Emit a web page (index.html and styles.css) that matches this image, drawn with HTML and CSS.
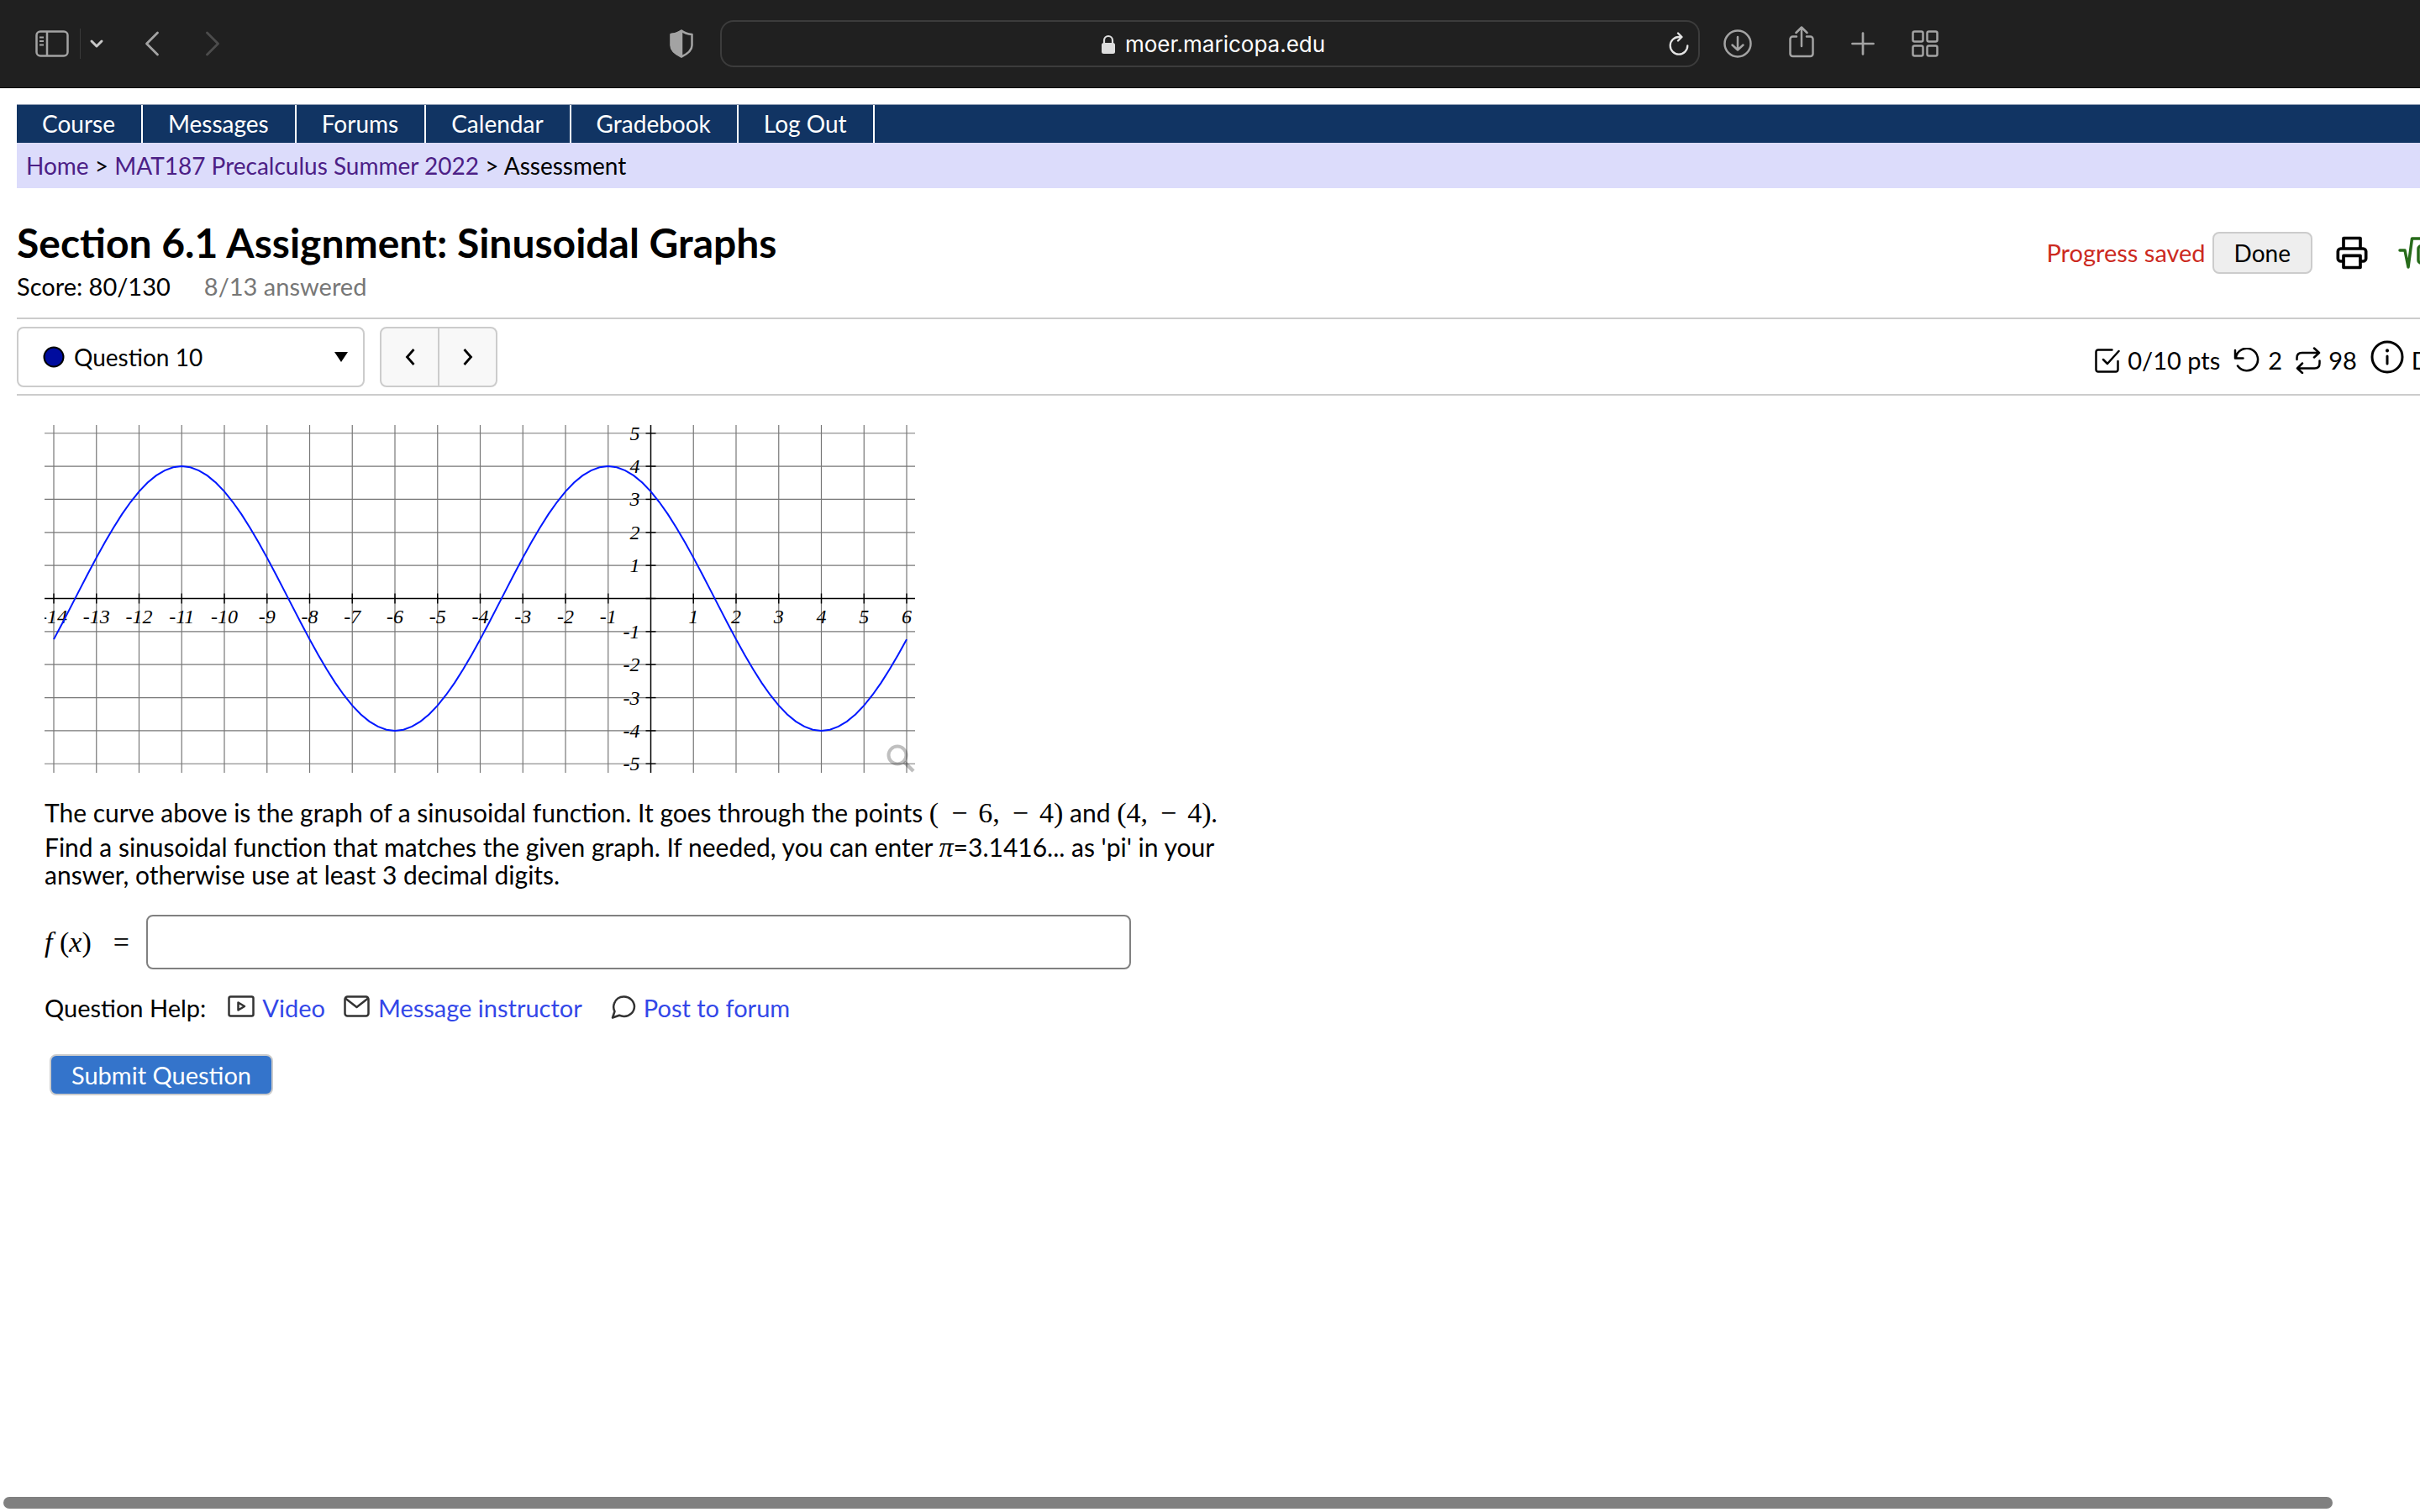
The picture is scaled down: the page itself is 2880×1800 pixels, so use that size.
FILE: index.html
```html
<!DOCTYPE html>
<html lang="en">
<head>
    <meta charset="UTF-8">
    <meta name="viewport" content="width=device-width, initial-scale=1.0">
    <title>Section 6.1 Assignment: Sinusoidal Graphs</title>
    <link rel="stylesheet" href="styles.css">
</head>
<body>
    <header class="toolbar">
        <div class="toolbar-left">
            <button class="tool sidebar-tool" aria-label="Sidebar">
                <svg width="40" height="32" viewBox="0 0 40 32" fill="none" stroke="#a3a3a3" stroke-width="2.5"><rect x="1.5" y="1.5" width="37" height="29" rx="4.5"/><path d="M14 2v28"/><path d="M5 8.5h5M5 13h5M5 17.500h5" stroke-width="2"/></svg>
            </button>
            <span class="divider"></span>
            <button class="tool menu-tool" aria-label="Tab groups">
                <svg width="18" height="12" viewBox="0 0 18 12" fill="none" stroke="#c8c8c8" stroke-width="3" stroke-linecap="round" stroke-linejoin="round"><path d="M3 3l6 6 6-6"/></svg>
            </button>
            <button class="tool back-tool" aria-label="Back">
                <svg width="18" height="30" viewBox="0 0 18 30" fill="none" stroke="#a3a3a3" stroke-width="2.800" stroke-linecap="round" stroke-linejoin="round"><path d="M15.500 2L2.500 15l13 13"/></svg>
            </button>
            <button class="tool forward-tool" aria-label="Forward">
                <svg width="18" height="30" viewBox="0 0 18 30" fill="none" stroke="#4c4c4c" stroke-width="2.800" stroke-linecap="round" stroke-linejoin="round"><path d="M2.500 2l13 13-13 13"/></svg>
            </button>
            <button class="tool shield-tool" aria-label="Privacy report">
                <svg width="28" height="34" viewBox="0 0 28 34" fill="none" stroke="#a3a3a3" stroke-width="2.500" stroke-linejoin="round"><path d="M14 1.500C17 4 21 5.500 26.500 6v13c0 6-5 10-12.500 13.500C6.500 29 1.500 25 1.500 19V6C7 5.500 11 4 14 1.500z"/><path d="M14 2v30C7 29 2 25 2 19V6c5-.5 9-2 12-4z" fill="#a3a3a3"/></svg>
            </button>
        </div>
        <div class="address">
            <div class="address-text">
                <svg width="16" height="24" viewBox="0 0 16 24"><path d="M3 11V7a5 5 0 0 1 10 0v4" fill="none" stroke="#dedede" stroke-width="2.200"/><rect y="10" width="16" height="13" rx="2.500" fill="#dedede"/></svg>
                <span>moer.maricopa.edu</span>
            </div>
            <button class="tool reload" aria-label="Reload">
                <svg width="26" height="28" viewBox="0 0 26 28" fill="none" stroke="#e4e4e4" stroke-width="2.300" stroke-linecap="round" stroke-linejoin="round"><path d="M13 6a10.300 10.300 0 1 0 10.300 10.300M13 6h3M12 1.500L16.500 6 12 10.500"/></svg>
            </button>
        </div>
        <div class="toolbar-right">
            <button class="tool" aria-label="Downloads">
                <svg width="34" height="34" viewBox="0 0 34 34" fill="none" stroke="#a3a3a3" stroke-width="2.500" stroke-linecap="round" stroke-linejoin="round"><circle cx="17" cy="17" r="15.500"/><path d="M17 9v15.500M10.500 18.500l6.500 6 6.500-6"/></svg>
            </button>
            <button class="tool share-tool" aria-label="Share">
                <svg width="30" height="38" viewBox="0 0 30 38" fill="none" stroke="#a3a3a3" stroke-width="2.500" stroke-linecap="round" stroke-linejoin="round"><path d="M9 12.500H4.500a3 3 0 0 0-3 3V33a3 3 0 0 0 3 3h21a3 3 0 0 0 3-3V15.500a3 3 0 0 0-3-3H21M15 24V2M8.500 8L15 1.500 21.500 8"/></svg>
            </button>
            <button class="tool" aria-label="New tab">
                <svg width="28" height="28" viewBox="0 0 28 28" fill="none" stroke="#a3a3a3" stroke-width="2.700" stroke-linecap="round"><path d="M14 1.500v25M1.500 14h25"/></svg>
            </button>
            <button class="tool" aria-label="Tab overview">
                <svg width="32" height="32" viewBox="0 0 32 32" fill="none" stroke="#a3a3a3" stroke-width="2.500"><rect x="1.500" y="1.500" width="12" height="12" rx="2"/><rect x="18.500" y="1.500" width="12" height="12" rx="2"/><rect x="1.500" y="18.500" width="12" height="12" rx="2"/><rect x="18.500" y="18.500" width="12" height="12" rx="2"/></svg>
            </button>
        </div>
    </header>

    <div class="page">
        <nav class="navbar">
            <a href="#">Course</a>
            <a href="#">Messages</a>
            <a href="#">Forums</a>
            <a href="#">Calendar</a>
            <a href="#">Gradebook</a>
            <a href="#">Log Out</a>
        </nav>
        <div class="breadcrumb"><a href="#">Home</a> &gt; <a href="#">MAT187 Precalculus Summer 2022</a> &gt; Assessment</div>

        <div class="assess-header">
            <div>
                <h1>Section 6.1 Assignment: Sinusoidal Graphs</h1>
                <div class="score"><span>Score: 80/130</span><span class="answered">8/13 answered</span></div>
            </div>
            <div class="header-actions">
                <span class="saved">Progress saved</span>
                <button class="done">Done</button>
                <button class="plain print" aria-label="Print">
                    <svg width="40" height="40" viewBox="0 0 24 24" fill="none" stroke="#000" stroke-width="2.200" stroke-linecap="round" stroke-linejoin="round"><path d="M6 9V1.500h12V9M6 18H4a2 2 0 0 1-2-2v-5a2 2 0 0 1 2-2h16a2 2 0 0 1 2 2v5a2 2 0 0 1-2 2h-2"/><path d="M6 14h12v8.500H6z"/></svg>
                </button>
                <button class="plain" aria-label="Math display">
                    <svg width="80" height="40" viewBox="0 0 80 40" fill="none" stroke="#276b1a" stroke-width="3.500" stroke-linecap="round" stroke-linejoin="round"><path d="M2 17h6l4 20L16.500 3H76"/><rect x="24" y="12" width="24" height="20" rx="3"/></svg>
                </button>
            </div>
        </div>

        <div class="question-bar">
            <div class="picker">
                <select aria-label="Question">
                    <option>Question 10</option>
                </select>
                <svg class="picker-dot" width="26" height="26" viewBox="0 0 26 26"><circle cx="13" cy="13" r="11.500" fill="#000c9e" stroke="#000" stroke-width="2"/></svg>
                <svg class="picker-arrow" width="16" height="12" viewBox="0 0 16 12"><path d="M0 0h16L8 12z"/></svg>
            </div>
            <div class="pager">
                <button aria-label="Previous"><svg width="12" height="20" viewBox="0 0 12 20" fill="none" stroke="#000" stroke-width="2.800"><path d="M10.500 1L2.500 10l8 9"/></svg></button>
                <button aria-label="Next"><svg width="12" height="20" viewBox="0 0 12 20" fill="none" stroke="#000" stroke-width="2.800"><path d="M1.500 1l8 9-8 9"/></svg></button>
            </div>
            <div class="stats">
                <span class="stat">
                    <svg width="30" height="30" viewBox="0 0 30 30" fill="none" stroke="#000" stroke-width="2.500" stroke-linecap="round" stroke-linejoin="round"><path d="M20.500 2.500H4a2.500 2.500 0 0 0-2.500 2.500v21A2.500 2.500 0 0 0 4 28.500h21a2.500 2.500 0 0 0 2.500-2.500V16M10 14l5 5L28.500 4"/></svg>
                    0/10 pts
                </span>
                <span class="stat">
                    <svg width="32" height="30" viewBox="0 0 32 30" fill="none" stroke="#000" stroke-width="2.500" stroke-linecap="round" stroke-linejoin="round"><path d="M2 3v9.500h9.500M2.800 12A13.200 13.200 0 1 1 5 21.500"/></svg>
                    2
                </span>
                <span class="stat">
                    <svg width="30" height="32" viewBox="0 0 30 32" fill="none" stroke="#000" stroke-width="2.500" stroke-linecap="round" stroke-linejoin="round"><path d="M22 1.500L28 7l-6 5.500M28 7H7.500Q1.500 7 1.500 13v2M8 19.500L2 25.500 8 31M2 25.500h20.500q6 0 6-6v-3"/></svg>
                    98
                </span>
                <span class="stat details">
                    <svg width="40" height="40" viewBox="0 0 40 40" fill="none" stroke="#000" stroke-width="3" stroke-linecap="round"><circle cx="20" cy="20" r="18"/><path d="M20 19v9"/><path d="M20 12.200v.2" stroke-width="4"/></svg>
                    Details
                </span>
            </div>
        </div>

        <main class="question">
            <svg class="graph" id="graph" width="1036" height="414" viewBox="0 0 1036 414" role="img" aria-label="Graph of a sinusoidal function"></svg>

            <p class="points">The curve above is the graph of a sinusoidal function. It goes through the points <span class="math">(<span class="op">&minus;</span>6,<span class="op">&minus;</span>4)</span> and <span class="math">(4,<span class="op">&minus;</span>4)</span>.</p>
            <p class="prompt">Find a sinusoidal function that matches the given graph. If needed, you can enter <span class="math"><i>&pi;</i></span>=3.1416... as 'pi' in your<br>answer, otherwise use at least 3 decimal digits.</p>

            <div class="answer">
                <label for="answer" class="math"><span><i>f</i> (<i>x</i>)</span><span>=</span></label>
                <input type="text" id="answer">
            </div>

            <div class="help">
                <span>Question Help:</span>
                <a href="#" class="video">
                    <svg width="32" height="26" viewBox="0 0 32 26" fill="none" stroke="#333" stroke-width="2.500" stroke-linejoin="round"><rect x="1.500" y="1.500" width="29" height="23" rx="2"/><path d="M12.500 8.500v9l7.500-4.500z"/></svg>
                    Video
                </a>
                <a href="#" class="message">
                    <svg width="32" height="26" viewBox="0 0 32 26" fill="none" stroke="#333" stroke-width="2.500" stroke-linejoin="round"><rect x="1.500" y="1.500" width="28" height="23" rx="3"/><path d="M2 3.500l13.500 10.500L29 3.500"/></svg>
                    Message instructor
                </a>
                <a href="#" class="forum">
                    <svg width="30" height="28" viewBox="0 0 30 28" fill="none" stroke="#333" stroke-width="2.500" stroke-linejoin="round"><path d="M2 26.500l2.500-7.500A11.500 11.500 0 0 1 4 9.500 12 12 0 0 1 15.500 1.500 12.200 12.200 0 0 1 28 13.200 12.200 12.200 0 0 1 15.500 25a13 13 0 0 1-5.500-1.300z"/></svg>
                    Post to forum
                </a>
            </div>

            <button class="submit">Submit Question</button>
        </main>
    </div>

    <div class="scrollbar"></div>

    <script src="graph.js"></script>
</body>
</html>
```
FILE: styles.css
```css
* {
    box-sizing: border-box;
}

body {
    margin: 0;
    background: #fff;
    color: #000;
    font-family: Lato, "Open Sans", sans-serif;
    font-size: 28px;
    line-height: 34px;
    overflow-x: hidden;
}

button,
select,
input {
    font: inherit;
    color: inherit;
}

svg {
    display: block;
    flex: none;
}

/* Browser toolbar */
.toolbar {
    display: grid;
    grid-template-columns: 857fr 1166fr 857fr;
    align-items: center;
    height: 105px;
    background: #202020;
    border-bottom: 1px solid #000;
}

.tool,
.plain {
    padding: 0;
    border: none;
    background: none;
}

.toolbar-left,
.toolbar-right {
    display: flex;
    align-items: center;
}

.toolbar-left {
    padding: 0 32px 0 42px;
}

.divider {
    width: 1px;
    height: 36px;
    margin: 0 10px 0 13px;
    background: #3a3a3a;
}

.back-tool {
    margin-left: 48px;
}

.forward-tool {
    margin-left: 54px;
}

.shield-tool {
    margin-left: auto;
}

.toolbar-right {
    gap: 44px;
    padding-left: 28px;
}

.share-tool {
    padding-bottom: 4px;
}

.address {
    display: flex;
    align-items: center;
    height: 56px;
    padding: 0 10px 0 44px;
    border: 2px solid #3c3c3c;
    border-radius: 16px;
}

.address-text {
    display: flex;
    flex: 1;
    align-items: center;
    justify-content: center;
    gap: 12px;
    padding-top: 2px;
    color: #fff;
    font-family: Inter, sans-serif;
    font-size: 26px;
}

/* The page is a little wider than the window */
.page {
    width: calc(100% + 80px);
    padding: 19px 0 0 20px;
}

.navbar {
    display: flex;
    height: 46px;
    background: #113463;
    border-top: 1px solid #8c9ab0;
}

.navbar a {
    padding: 5px 31px 0 30px;
    border-right: 2px solid #fff;
    color: #fff;
    text-decoration: none;
}

.breadcrumb {
    height: 54px;
    padding: 10px 11px;
    background: #dcdcfb;
}

.breadcrumb a {
    color: #4c2086;
    text-decoration: none;
}

.assess-header {
    display: flex;
    justify-content: space-between;
    padding: 38px 0 20px;
    border-bottom: 2px solid #ccc;
}

h1 {
    margin: 0 0 8px;
    font-size: 48px;
    line-height: 54px;
}

.score,
.saved,
.stats,
.help,
.submit {
    font-size: 29px;
}

.score {
    display: flex;
    gap: 40px;
}

.answered {
    color: #777;
}

.header-actions {
    display: flex;
    align-items: center;
    height: 50px;
    margin-top: 14px;
    padding-right: 26px;
}

.saved {
    color: #cc2a1f;
}

.done {
    height: 50px;
    margin: 0 27px 0 8px;
    padding: 0 24px;
    background: #eee;
    border: 2px solid #ccc;
    border-radius: 8px;
}

.print {
    margin-right: 35px;
}

.question-bar {
    display: flex;
    align-items: center;
    height: 91px;
    border-bottom: 2px solid #ccc;
}

.picker {
    position: relative;
    width: 414px;
}

.picker select {
    width: 100%;
    height: 72px;
    padding: 0 66px;
    appearance: none;
    background: #fff;
    border: 2px solid #ccc;
    border-radius: 8px;
}

.picker-dot,
.picker-arrow {
    position: absolute;
    pointer-events: none;
}

.picker-dot {
    top: 23px;
    left: 31px;
}

.picker-arrow {
    top: 30px;
    right: 20px;
}

.pager {
    display: flex;
    margin-left: 18px;
}

.pager button {
    display: flex;
    align-items: center;
    justify-content: center;
    width: 71px;
    height: 72px;
    background: #f8f8f8;
    border: 2px solid #ccc;
    border-radius: 8px 0 0 8px;
}

.pager button + button {
    margin-left: -2px;
    border-radius: 0 8px 8px 0;
}

.stats {
    display: flex;
    align-items: center;
    gap: 16px;
    margin-left: auto;
    padding: 8px 2px 0 0;
}

.stat {
    display: flex;
    align-items: center;
    gap: 9px;
}

.details svg {
    margin-bottom: 8px;
}

.question {
    padding: 35px 0 0 33px;
}

.graph text {
    font: italic 24px "Liberation Serif", serif;
}

.question p {
    margin: 0;
    font-size: 30px;
    white-space: nowrap;
}

.math {
    font-family: "Liberation Serif", serif;
    font-size: 34px;
}

.op {
    margin: 0 13px 0 15px;
}

.question .points {
    margin: 27px 0 4px;
    line-height: 40px;
}

.prompt {
    line-height: 33px;
}

.prompt .math {
    line-height: 0;
}

.answer {
    display: flex;
    align-items: center;
    gap: 20px;
    margin-top: 31px;
}

.answer label {
    display: flex;
    justify-content: space-between;
    width: 101px;
}

.answer input {
    width: 1172px;
    height: 65px;
    padding: 0 12px;
    border: 2px solid #808080;
    border-radius: 8px;
}

.help {
    display: flex;
    margin-top: 29px;
}

.help a {
    display: flex;
    gap: 9px;
    color: #3347e8;
    text-decoration: none;
}

.help svg {
    margin-top: 2px;
}

.video {
    margin-left: 26px;
}

.message {
    margin-left: 22px;
}

.forum {
    margin-left: 34px;
}

.submit {
    height: 49px;
    margin: 38px 6px;
    padding: 0 24px;
    background: #3474cb;
    border: 2px solid #ccc;
    border-radius: 8px;
    color: #fff;
}

.scrollbar {
    position: fixed;
    right: 104px;
    bottom: 4px;
    left: 4px;
    height: 14px;
    background: #808080;
    border-radius: 7px;
}
```
FILE: graph.js
```js
const graph = document.getElementById("graph");
const originX = 721.5;
const originY = 206.5;
const unitX = 50.75;
const unitY = 39.35;

function px(x) {
    return originX + x * unitX;
}

function py(y) {
    return originY - y * unitY;
}

function add(name, attrs, text) {
    const el = document.createElementNS("http://www.w3.org/2000/svg", name);
    for (const key in attrs) {
        el.setAttribute(key, attrs[key]);
    }
    if (text !== undefined) {
        el.textContent = text;
    }
    graph.appendChild(el);
}

function line(x1, y1, x2, y2, color, width) {
    add("path", { d: `M${x1} ${y1}L${x2} ${y2}`, stroke: color, "stroke-width": width });
}

// grid
for (let x = -14; x <= 6; x++) {
    line(px(x), 0, px(x), 414, "#777", 1.2);
}
for (let y = -5; y <= 5; y++) {
    line(0, py(y), 1036, py(y), "#777", 1.2);
}

// axes
line(0, originY, 1036, originY, "#000", 1.4);
line(originX, 0, originX, 414, "#000", 1.4);

// ticks and labels
for (let x = -14; x <= 6; x++) {
    if (x === 0) continue;
    line(px(x), originY - 6, px(x), originY + 6, "#000", 1.4);
    add("text", { x: px(x), y: originY + 29, "text-anchor": "middle" }, x);
}
for (let y = -5; y <= 5; y++) {
    line(originX - 6, py(y), originX + 6, py(y), "#000", 1.4);
    if (y === 0) continue;
    add("text", { x: originX - 13, y: py(y) + 8, "text-anchor": "end" }, y);
}

// y = 4 cos(pi/5 (x + 1))
const points = [];
for (let i = 0; i <= 100; i++) {
    const x = -14 + i * 0.2;
    points.push(px(x) + "," + py(4 * Math.cos(Math.PI / 5 * (x + 1))));
}
add("polyline", { points: points.join(" "), fill: "none", stroke: "#0018ff", "stroke-width": 2 });

// magnifier
add("circle", { cx: 1015, cy: 393, r: 10.5, fill: "none", stroke: "#000", "stroke-opacity": 0.25, "stroke-width": 4 });
add("path", { d: "M1023 401L1034 412", stroke: "#000", "stroke-opacity": 0.25, "stroke-width": 4.5 });
```
